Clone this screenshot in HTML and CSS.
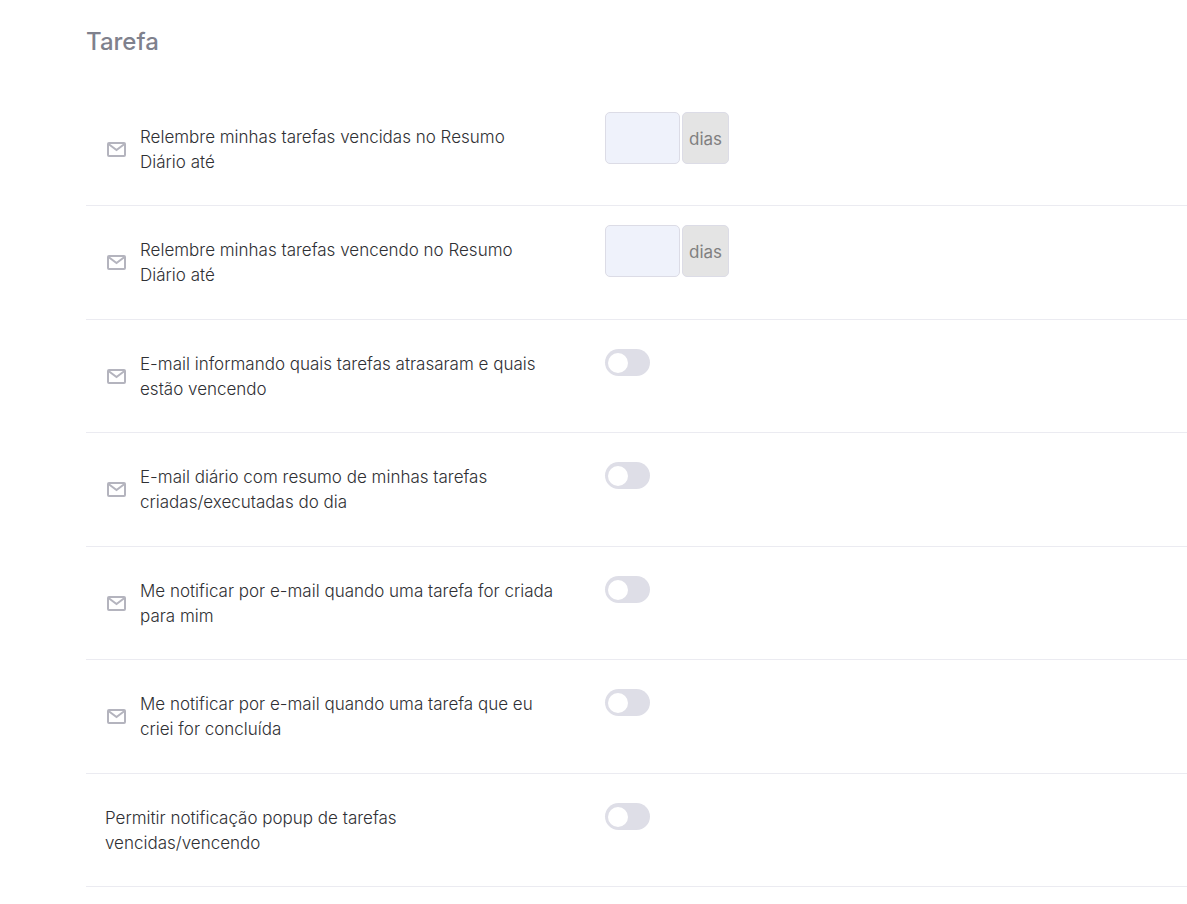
FILE: index.html
```html
<!DOCTYPE html>
<html lang="pt-BR">
<head>
  <meta charset="UTF-8">
  <meta name="viewport" content="width=device-width, initial-scale=1.0">
  <title>Tarefa</title>
  <link rel="stylesheet" href="styles.css">
</head>
<body>

  <svg class="sprite" aria-hidden="true">
    <symbol id="icon-mail" viewBox="0 0 24 24">
      <rect x="3" y="5" width="17" height="13" rx="1" />
      <path d="M3.5 6 L11.5 12 L19.5 6" />
    </symbol>
  </svg>

  <main class="settings">
    <h1 class="title">Tarefa</h1>

    <div class="row">
      <div class="info">
        <svg class="icon"><use href="#icon-mail" /></svg>
        <label for="dias-vencidas">Relembre minhas tarefas vencidas no Resumo Diário&nbsp;até</label>
      </div>
      <div class="days">
        <input type="text" id="dias-vencidas" class="days-input" inputmode="numeric">
        <span class="days-unit">dias</span>
      </div>
    </div>

    <div class="row">
      <div class="info">
        <svg class="icon"><use href="#icon-mail" /></svg>
        <label for="dias-vencendo">Relembre minhas tarefas vencendo no Resumo Diário&nbsp;até</label>
      </div>
      <div class="days">
        <input type="text" id="dias-vencendo" class="days-input" inputmode="numeric">
        <span class="days-unit">dias</span>
      </div>
    </div>

    <div class="row">
      <div class="info">
        <svg class="icon"><use href="#icon-mail" /></svg>
        <label for="email-atrasadas">E-mail informando quais tarefas atrasaram e quais estão vencendo</label>
      </div>
      <input type="checkbox" id="email-atrasadas" class="switch">
    </div>

    <div class="row">
      <div class="info">
        <svg class="icon"><use href="#icon-mail" /></svg>
        <label for="email-resumo">E-mail diário com resumo de minhas tarefas criadas/executadas do dia</label>
      </div>
      <input type="checkbox" id="email-resumo" class="switch">
    </div>

    <div class="row">
      <div class="info">
        <svg class="icon"><use href="#icon-mail" /></svg>
        <label for="email-criada">Me notificar por e-mail quando uma tarefa for criada para mim</label>
      </div>
      <input type="checkbox" id="email-criada" class="switch">
    </div>

    <div class="row">
      <div class="info">
        <svg class="icon"><use href="#icon-mail" /></svg>
        <label for="email-concluida">Me notificar por e-mail quando uma tarefa que eu criei for concluída</label>
      </div>
      <input type="checkbox" id="email-concluida" class="switch">
    </div>

    <div class="row">
      <div class="info">
        <label for="popup">Permitir notificação popup de tarefas<br>vencidas/vencendo</label>
      </div>
      <input type="checkbox" id="popup" class="switch">
    </div>
  </main>

</body>
</html>
```

FILE: styles.css
```css
* {
  box-sizing: border-box;
}

body {
  margin: 0;
  background: #fff;
  color: #2f3034;
  font-family: Inter, "Liberation Sans", sans-serif;
  font-size: 17px;
  font-weight: 300;
  line-height: 25px;
}

.sprite {
  display: none;
}

.settings {
  padding: 26px 0 16px 86px;
}

.title {
  margin: 0 0 35px;
  color: #7f818d;
  font-size: 24px;
  font-weight: 500;
  line-height: 32px;
}

.row {
  display: grid;
  grid-template-columns: minmax(0, 33fr) minmax(0, 37fr);
  align-items: start;
  border-bottom: 1px solid #ebebf1;
}

.info {
  display: flex;
  align-items: center;
  gap: 11px;
  padding: 32px 46px 30px 19px;
}

.row:nth-of-type(even) .info {
  padding-bottom: 31px;
}

.icon {
  flex: none;
  width: 24px;
  height: 24px;
  fill: none;
  stroke: #b4b4be;
  stroke-width: 2;
}

.days {
  display: flex;
  gap: 2px;
  margin-top: 19px;
}

.days-input,
.days-unit {
  height: 52px;
  border: 1px solid #dcdce6;
  border-radius: 5px;
}

.days-input {
  width: 75px;
  padding: 0 10px;
  background: #eff2fb;
  color: inherit;
  font: inherit;
}

.days-unit {
  padding: 0 6px;
  background: #e4e4e4;
  color: #808080;
  font-weight: 400;
  line-height: 52px;
}

.switch {
  display: flex;
  align-items: center;
  width: 45px;
  height: 27px;
  margin: 29px 0 0;
  padding: 0 3px;
  appearance: none;
  border-radius: 14px;
  background: #dedee7;
  cursor: pointer;
}

.switch::before {
  content: "";
  width: 20px;
  height: 20px;
  border-radius: 50%;
  background: #fff;
}

.switch:checked {
  justify-content: flex-end;
  background: #5d78ff;
}
```
